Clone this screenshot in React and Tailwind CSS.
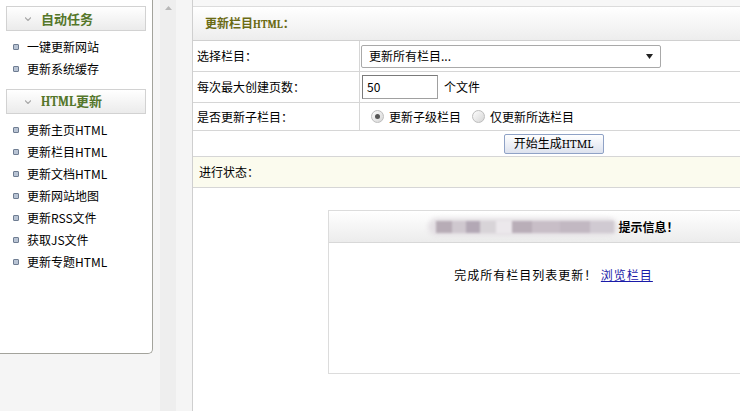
import React from 'react';

const FONT = { fontFamily: '"Noto Sans CJK SC", "Liberation Sans", sans-serif' };

const autoTasks = ['一键更新网站', '更新系统缓存'];
const htmlTasks = ['更新主页HTML', '更新栏目HTML', '更新文档HTML', '更新网站地图', '更新RSS文件', '获取JS文件', '更新专题HTML'];

function MenuHeader({ children }) {
  return (
    <div className="h-[25px] flex items-center border border-[#d2d2d2] bg-gradient-to-b from-white to-[#ebebeb]">
      <span className="ml-[18px] w-[16px] flex items-center">
        <svg width="6" height="4" viewBox="0 0 6 4">
          <path d="M0 0.5 L3 3.5 L6 0.5" fill="none" stroke="#a8a8a8" strokeWidth="1.2" />
        </svg>
      </span>
      <span className="text-[13px] font-bold text-[#55772b]">{children}</span>
    </div>
  );
}

function MenuList({ items }) {
  return (
    <ul className="pt-[5px]">
      {items.map((t) => (
        <li key={t} className="h-[22px] flex items-center text-[12px] text-black">
          <span className="ml-[7px] mr-[8px] w-[6px] h-[6px] rounded-[1px] border border-[#6f7d92] bg-[#b9c4d4]" />
          {t}
        </li>
      ))}
    </ul>
  );
}

function Radio({ checked }) {
  return (
    <span className="w-[13px] h-[13px] rounded-full border border-[#bdbdbd] bg-gradient-to-br from-[#fdfdfd] to-[#d6d6d6] flex items-center justify-center">
      {checked && <span className="w-[5px] h-[5px] rounded-full bg-[#555]" />}
    </span>
  );
}

export default function App() {
  return (
    <div className="w-[740px] h-[411px] overflow-hidden flex bg-[#f5f5f5]" style={FONT}>
      {/* left menu */}
      <div className="w-[153px] shrink-0 self-start h-[354px] bg-white border-r border-b border-[#a3a39c] rounded-br-[5px] px-[6px] pt-[6px]">
        <MenuHeader>自动任务</MenuHeader>
        <MenuList items={autoTasks} />
        <div className="mt-[9px]">
          <MenuHeader>
            <span className="font-serif">HTML</span>更新
          </MenuHeader>
        </div>
        <MenuList items={htmlTasks} />
      </div>

      {/* splitter */}
      <div className="w-[7px] shrink-0 bg-[#f5f5f5]" />
      <div className="w-[16px] shrink-0 bg-[#eeeeee] flex justify-center pt-[6px]">
        <svg width="7" height="4" viewBox="0 0 7 4">
          <path d="M0 4 L3.5 0 L7 4 Z" fill="#b8b8b8" />
        </svg>
      </div>
      <div className="w-[16px] shrink-0 bg-[#f5f5f5]" />

      {/* main */}
      <div className="w-[722px] shrink-0 bg-white border-l border-[#cfcfcf] text-[12px] text-black">
        <div className="h-[7px] bg-[#f7f7f7] border-b border-[#dcdcdc]" />
        <div className="h-[34px] flex items-center pl-[12px] border-b border-[#d0d0d0] bg-gradient-to-b from-white to-[#ededed]">
          <span className="font-bold text-[#6b6b14] text-[12px]">
            更新栏目<span className="font-serif text-[11px]">HTML</span>：
          </span>
        </div>

        <div className="flex h-[31px] border-b border-[#d6d6d6]">
          <div className="w-[167px] border-r border-[#d6d6d6] flex items-center pl-[4px]">选择栏目：</div>
          <div className="flex items-center pl-[1px]">
            <div className="w-[300px] h-[23px] border border-[#a9a9a9] rounded-[2px] bg-white flex items-center justify-between pl-[7px] pr-[7px]">
              <span>更新所有栏目...</span>
              <svg width="7" height="5" viewBox="0 0 7 5">
                <path d="M0 0 L7 0 L3.5 5 Z" fill="#222" />
              </svg>
            </div>
          </div>
        </div>

        <div className="flex h-[31px] border-b border-[#d6d6d6]">
          <div className="w-[167px] border-r border-[#d6d6d6] flex items-center pl-[4px]">每次最大创建页数：</div>
          <div className="flex items-center pl-[2px]">
            <div className="w-[76px] h-[24px] border border-[#a0a0a0] border-t-[#7a7a7a] border-l-[#7a7a7a] flex items-center pl-[4px]">50</div>
            <span className="ml-[6px]">个文件</span>
          </div>
        </div>

        <div className="flex h-[28px] border-b border-[#d6d6d6]">
          <div className="w-[167px] border-r border-[#d6d6d6] flex items-center pl-[4px]">是否更新子栏目：</div>
          <div className="flex items-center pl-[11px]">
            <Radio checked />
            <span className="ml-[5px]">更新子级栏目</span>
            <span className="ml-[11px]"><Radio /></span>
            <span className="ml-[5px]">仅更新所选栏目</span>
          </div>
        </div>

        <div className="flex h-[26px] border-b border-[#d6d6d6] items-center justify-center">
          <button className="w-[100px] h-[20px] border border-[#8fa2c6] rounded-[2px] bg-gradient-to-b from-white to-[#dde2ee] text-[12px] leading-none">
            开始生成<span className="font-serif">HTML</span>
          </button>
        </div>

        <div className="flex h-[31px] border-b border-[#d6d6d6] items-center pl-[6px] bg-[#fbfbee]">进行状态：</div>

        <div className="pt-[22px] flex justify-center">
          <div className="w-[452px] border border-[#dcdcdc]">
            <div className="h-[32px] flex items-center justify-center border-b border-[#d8d8d8] bg-gradient-to-b from-white to-[#ececec]">
              <div className="relative w-[190px] h-[18px]">
                <div className="absolute inset-0 rounded-full bg-[#e4e0e4] blur-[2px]" />
                <div className="absolute left-[8px] right-[4px] top-[3px] flex h-[12px] blur-[1px]">
                  <span className="w-[16px] bg-[#b7acb6]" />
                  <span className="w-[14px] bg-[#cfc8cf]" />
                  <span className="w-[14px] bg-[#b3a8b5]" />
                  <span className="w-[16px] bg-[#d8d4d8]" />
                  <span className="w-[16px] bg-[#ece8ec]" />
                  <span className="w-[20px] bg-[#b9aeb8]" />
                  <span className="w-[28px] bg-[#c8bec7]" />
                  <span className="w-[30px] bg-[#c2b8c2]" />
                  <span className="flex-1 bg-[#d0cad2]" />
                </div>
              </div>
              <span className="font-bold text-[12px]">提示信息！</span>
            </div>
            <div className="h-[130px] flex justify-center pt-[23px]">
              <span className="tracking-[1px]">
                完成所有栏目列表更新！ <a href="#" className="text-[#1a1aa8] underline">浏览栏目</a>
              </span>
            </div>
          </div>
        </div>
      </div>
    </div>
  );
}
